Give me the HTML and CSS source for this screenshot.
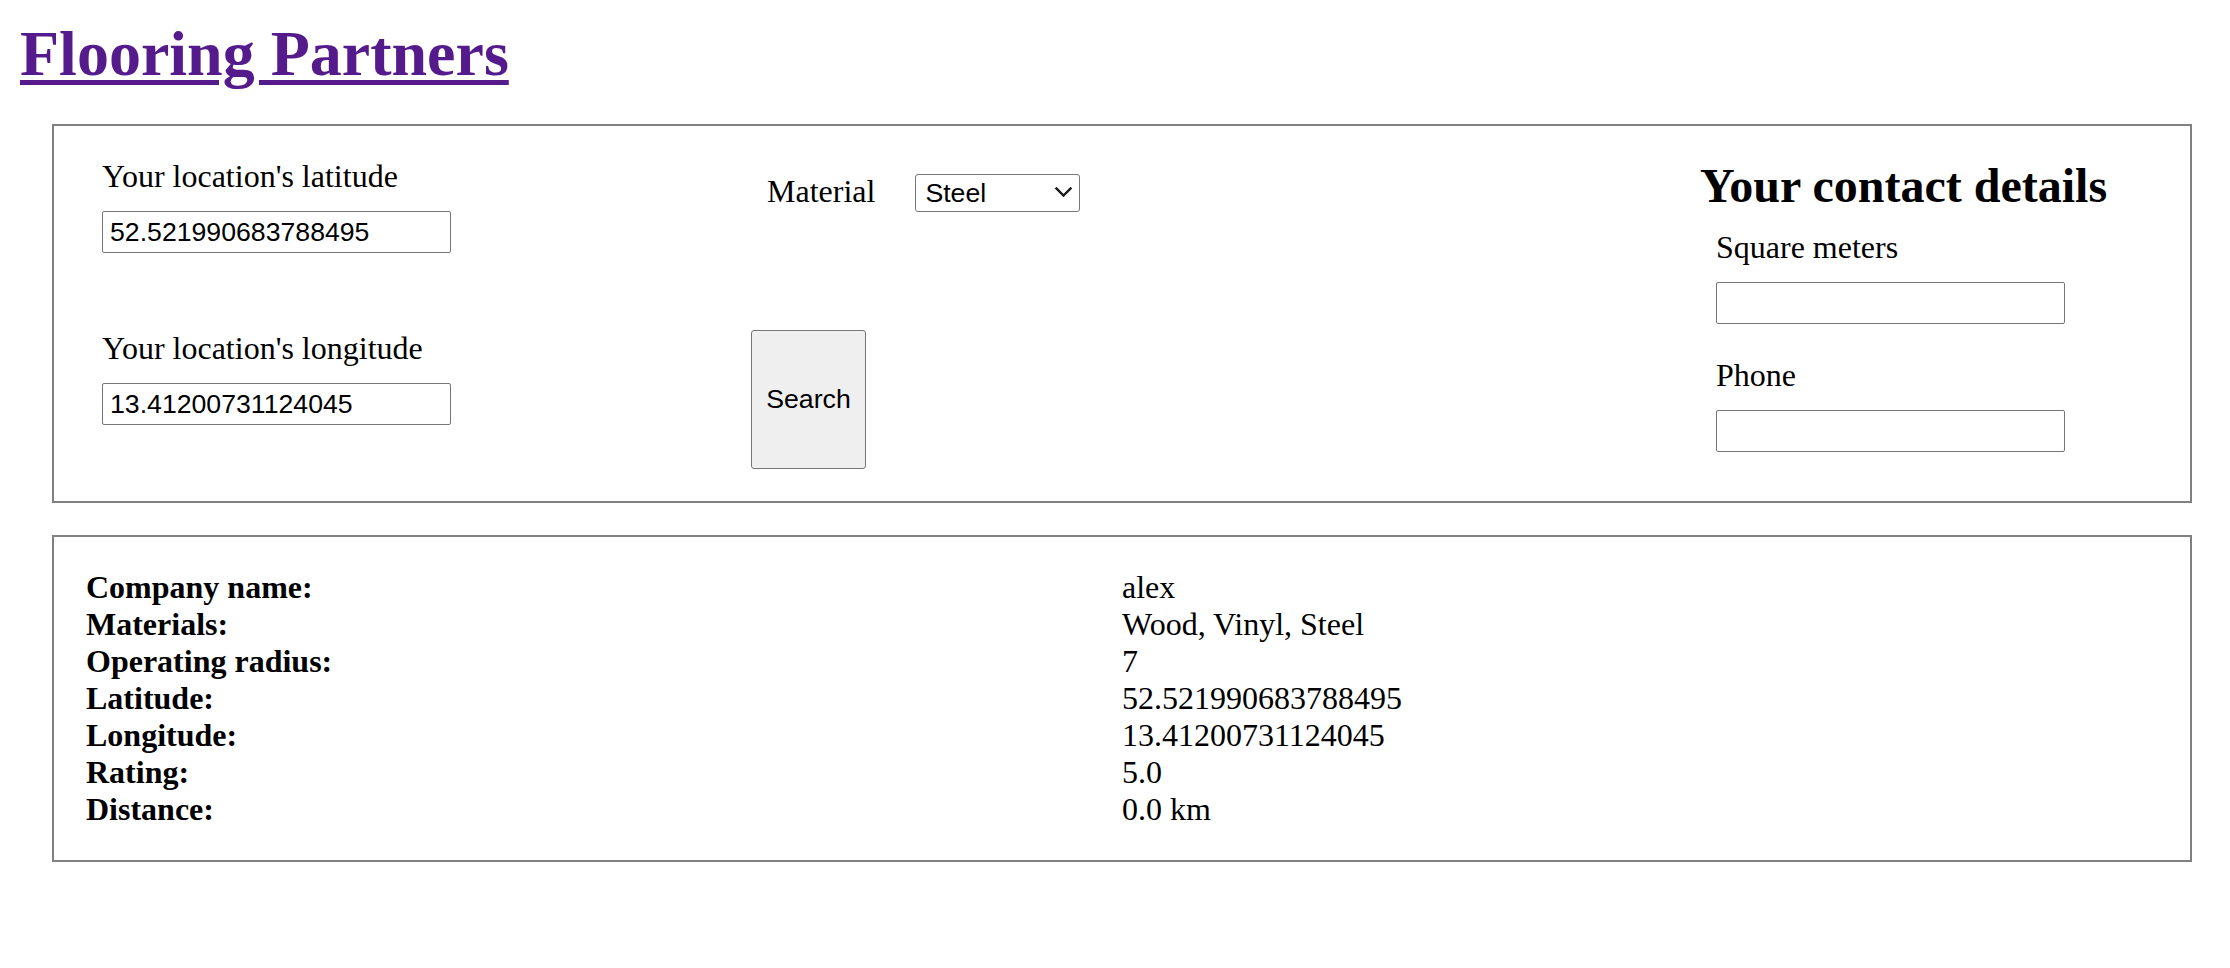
FILE: index.html
```html
<!DOCTYPE html>
<html lang="en">
<head>
<meta charset="utf-8">
<title>Flooring Partners</title>
<link rel="stylesheet" href="styles.css">
</head>
<body>
<h1 class="page-title"><a class="title-link" href="#">Flooring Partners</a></h1>

<form class="search-box">
  <div class="col col-location">
    <div class="field">
      <label class="field-label" for="lat">Your location's latitude</label>
      <input class="text-input" id="lat" type="text" value="52.521990683788495">
    </div>
    <div class="field field-spaced">
      <label class="field-label" for="lon">Your location's longitude</label>
      <input class="text-input" id="lon" type="text" value="13.41200731124045">
    </div>
  </div>

  <div class="col col-material">
    <div class="material-row">
      <label class="material-label" for="material">Material</label>
      <div class="select-wrap">
        <select class="select" id="material">
          <option>Wood</option>
          <option>Vinyl</option>
          <option selected>Steel</option>
        </select>
        <svg class="chevron" width="19" height="12" viewBox="0 0 19 12" aria-hidden="true"><path d="M1.6 1.6 L9.5 9.5 L17.4 1.6" fill="none" stroke="#1b1b1b" stroke-width="2.4"/></svg>
      </div>
    </div>
    <button class="search-btn" type="button">Search</button>
  </div>

  <div class="col col-contact">
    <h2 class="contact-title">Your contact details</h2>
    <div class="field field-indent">
      <label class="field-label" for="sqm">Square meters</label>
      <input class="text-input" id="sqm" type="text">
    </div>
    <div class="field field-indent field-gap">
      <label class="field-label" for="phone">Phone</label>
      <input class="text-input" id="phone" type="text">
    </div>
  </div>
</form>

<section class="results">
  <dl class="result-list">
    <dt>Company name:</dt><dd>alex</dd>
    <dt>Materials:</dt><dd>Wood, Vinyl, Steel</dd>
    <dt>Operating radius:</dt><dd>7</dd>
    <dt>Latitude:</dt><dd>52.521990683788495</dd>
    <dt>Longitude:</dt><dd>13.41200731124045</dd>
    <dt>Rating:</dt><dd>5.0</dd>
    <dt>Distance:</dt><dd>0.0 km</dd>
  </dl>
</section>
</body>
</html>
```

FILE: styles.css
```css
html, body {
  background: #ffffff;
}

body {
  margin: 16px;
  font-family: "Liberation Serif", "Times New Roman", serif;
  font-size: 32px;
  line-height: normal;
  color: #000000;
}

.page-title {
  margin: 1px 0 33px 4px;
  font-size: 64px;
  font-weight: bold;
  line-height: normal;
}

.title-link {
  color: #551a8b;
  text-decoration: underline;
  text-decoration-thickness: 5px;
  text-underline-offset: 5px;
}

.search-box {
  margin: 0 22px 0 36px;
  border: 2px solid #808080;
  padding: 32px 0 32px 48px;
  display: grid;
  grid-template-columns: 649px 949px 1fr;
  align-items: start;
}

.col {
  display: flex;
  flex-direction: column;
  align-items: flex-start;
}

.field {
  display: flex;
  flex-direction: column;
  align-items: flex-start;
}

.field-label {
  display: block;
  margin-bottom: 16px;
}

.field-spaced {
  margin-top: 77px;
}

.field-indent {
  margin-left: 16px;
}

.field-gap {
  margin-top: 33px;
}

.text-input {
  box-sizing: border-box;
  width: 349px;
  height: 42px;
  margin: 0;
  padding: 0 7px;
  border: 1px solid #767676;
  border-radius: 2px;
  background: #ffffff;
  font-family: "Liberation Sans", Arial, sans-serif;
  font-size: 26.67px;
  color: #000000;
}

.material-row {
  display: flex;
  align-items: baseline;
  margin-top: 15px;
  padding-left: 16px;
}

.material-label {
  margin-right: 40px;
}

.select-wrap {
  position: relative;
  display: inline-block;
}

.select {
  -webkit-appearance: none;
  appearance: none;
  box-sizing: border-box;
  width: 165px;
  height: 38px;
  margin: 0;
  padding: 0 9px;
  border: 1px solid #767676;
  border-radius: 3px;
  background: #ffffff;
  font-family: "Liberation Sans", Arial, sans-serif;
  font-size: 26.67px;
  color: #000000;
}

.chevron {
  position: absolute;
  left: 139px;
  top: 13px;
  pointer-events: none;
}

.search-btn {
  box-sizing: border-box;
  width: 115px;
  height: 139px;
  margin-top: 118px;
  padding: 0;
  border: 1px solid #767676;
  border-radius: 3px;
  background: #efefef;
  font-family: "Liberation Sans", Arial, sans-serif;
  font-size: 26.67px;
  color: #000000;
}

.contact-title {
  margin: 0 0 16px 0;
  font-size: 48px;
  font-weight: bold;
  line-height: normal;
}

.results {
  margin: 32px 22px 0 36px;
  border: 2px solid #808080;
  padding: 32px;
}

.result-list {
  margin: 0;
  display: grid;
  grid-template-columns: 1fr 1fr;
}

.result-list dt {
  font-weight: bold;
}

.result-list dd {
  margin: 0;
}
```
